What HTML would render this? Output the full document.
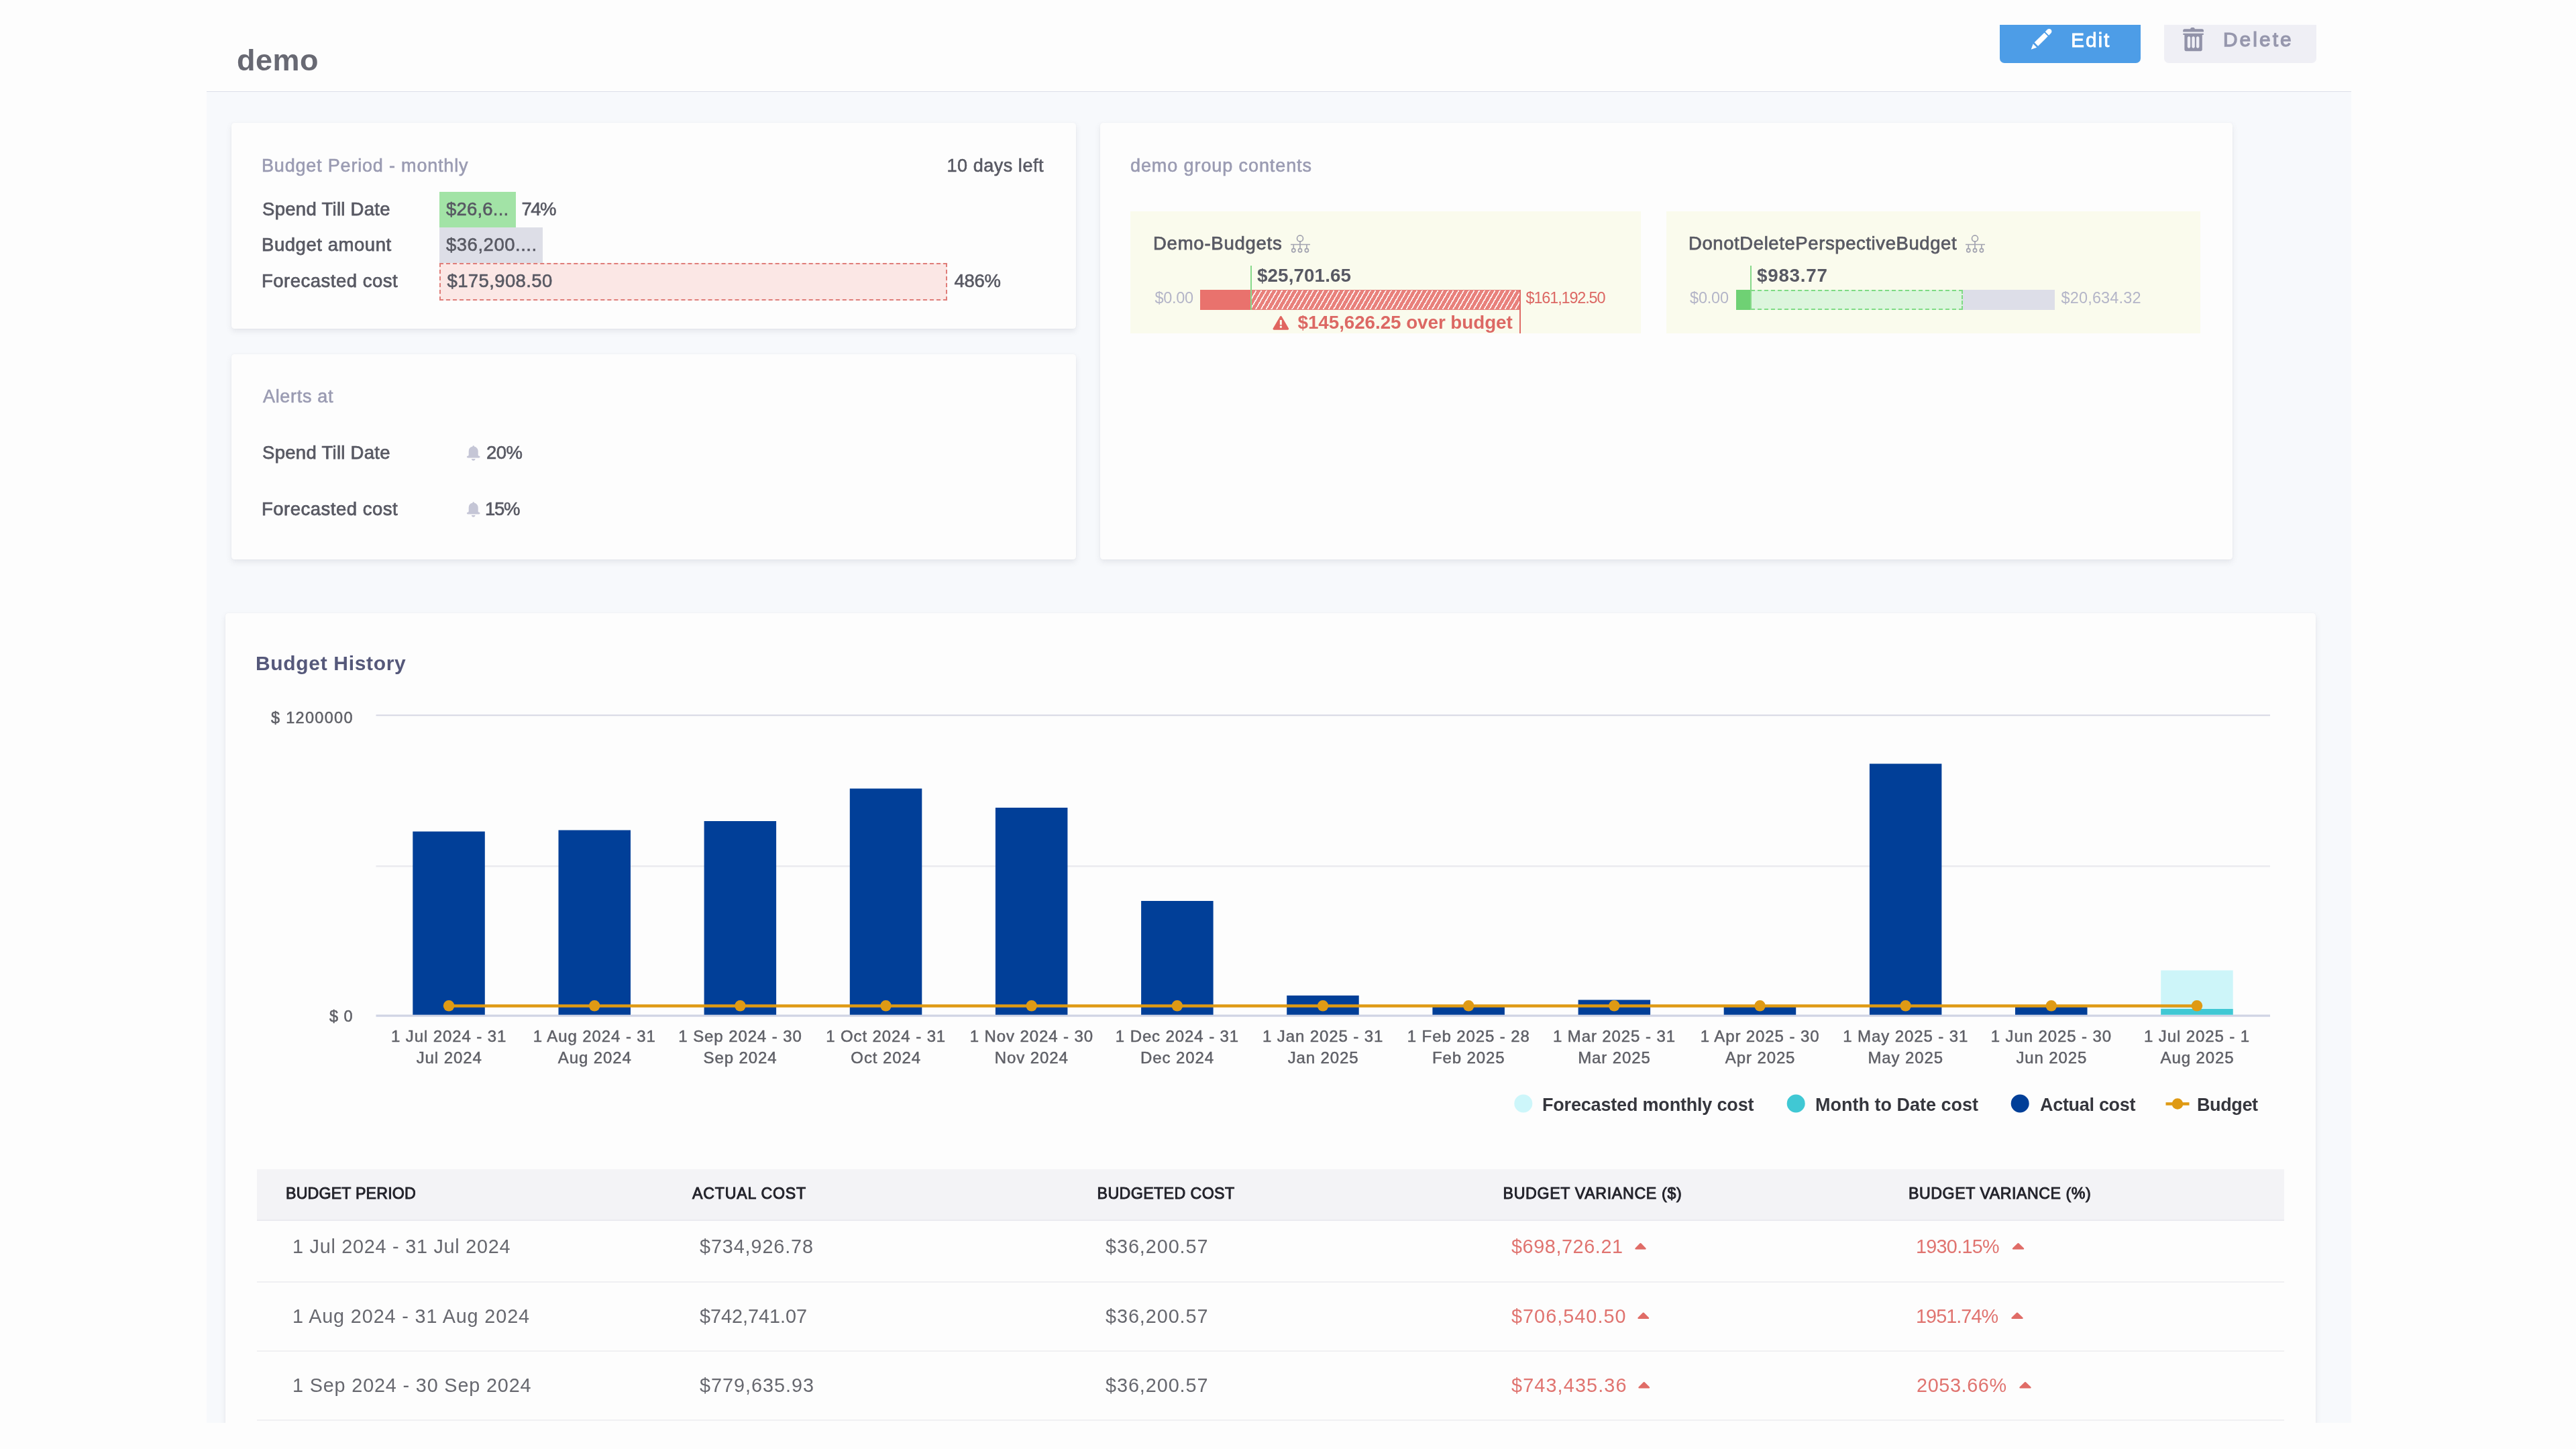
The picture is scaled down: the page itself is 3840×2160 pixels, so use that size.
<!DOCTYPE html>
<html lang="en"><head><meta charset="utf-8"><title>demo - Budget</title>
<style>
html,body{margin:0;padding:0}
body{width:3840px;height:2160px;overflow:hidden;position:relative;background:#fdfdfd;font-family:"Liberation Sans",sans-serif}
.abs,.t,.card,.bar{position:absolute}
.t{white-space:pre;line-height:1}
.header{left:308px;top:36px;width:3197.3px;height:101.4px;background:#fdfdfd;border-bottom:1.8px solid #dde0ea;box-sizing:border-box}
.main{left:308px;top:137.3px;width:3197.3px;height:1984.2px;background:#f7f9fc;overflow:hidden}
.card{background:#fdfdfd;border-radius:4.5px;box-shadow:0 0 2px rgba(40,41,61,.05),0 4px 9px rgba(96,97,112,.12)}
.btn{top:37px;height:57px;border-radius:0 0 7px 7px}
.tile{background:#fafbed}
svg{position:absolute;left:0;top:0;overflow:visible}
</style></head>
<body>
<div class="abs header"></div>
<div class="abs main">
  <div class="card" style="left:37px;top:45.7px;width:1259px;height:307.2px"></div>
  <div class="card" style="left:37px;top:390.7px;width:1259px;height:306.2px"></div>
  <div class="card" style="left:1331.5px;top:45.7px;width:1688.5px;height:651.2px"></div>
  <div class="card" style="left:27.5px;top:776.6px;width:3116.3px;height:1300px"></div>
</div>
<div class="abs btn" style="left:2981px;width:209.5px;background:#4d9de7"></div>
<div class="abs btn" style="left:3226px;width:226.5px;background:#efeff5"></div>

<!-- card 1 bars -->
<div class="bar" style="left:655px;top:286px;width:114px;height:52.5px;background:#a2e3a6"></div>
<div class="bar" style="left:655px;top:338.5px;width:153.5px;height:53px;background:#dddee7"></div>
<div class="bar" style="left:655px;top:391.5px;width:756.5px;height:56.5px;background:#fbe7e5;border:2px dashed #df7d79;box-sizing:border-box"></div>

<!-- card 3 tiles -->
<div class="bar tile" style="left:1684.5px;top:315px;width:761px;height:181.5px"></div>
<div class="bar tile" style="left:2484px;top:315px;width:796px;height:181.5px"></div>
<div class="bar" style="left:1789px;top:431.5px;width:76.5px;height:30px;background:#e9726d"></div>
<div class="bar" style="left:1865.5px;top:431.5px;width:401px;height:30px;background:repeating-linear-gradient(120deg,#e8807b 0 4.9px,#fdeeed 4.9px 6.7px);border-top:1.5px solid #e4807b;border-bottom:1.5px solid #e4807b;box-sizing:border-box"></div>
<div class="bar" style="left:1864.2px;top:396px;width:1.6px;height:65.5px;background:#86d98a"></div>
<div class="bar" style="left:2264.5px;top:431.5px;width:2.5px;height:65px;background:#df6b66"></div>

<div class="bar" style="left:2587.5px;top:431.5px;width:22.5px;height:30px;background:#6fd174"></div>
<div class="bar" style="left:2610px;top:431.5px;width:316px;height:30px;background:#dcf5dd;border:2px dashed #7fdb84;border-left:none;box-sizing:border-box"></div>
<div class="bar" style="left:2926px;top:431.5px;width:136.5px;height:30px;background:#dddee8"></div>
<div class="bar" style="left:2609.2px;top:396px;width:1.6px;height:65.5px;background:#86d98a"></div>

<!-- table -->
<div class="bar" style="left:382.5px;top:1743px;width:3022.5px;height:77px;background:#f3f3f6;border-bottom:2px solid #ebebf0;box-sizing:border-box"></div>
<div class="bar" style="left:382.5px;top:1910px;width:3022.5px;height:1.5px;background:#f0f0f3"></div>
<div class="bar" style="left:382.5px;top:2013px;width:3022.5px;height:1.5px;background:#f0f0f3"></div>
<div class="bar" style="left:382.5px;top:2116px;width:3022.5px;height:1.5px;background:#f0f0f3"></div>

<svg width="3840" height="2160" viewBox="0 0 3840 2160">
  <!-- chart -->
  <line x1="560.5" x2="3384" y1="1066.3" y2="1066.3" stroke="#d6d7e3" stroke-width="2"/>
  <line x1="560.5" x2="3384" y1="1291.2" y2="1291.2" stroke="#ebebef" stroke-width="2.4"/>
  <line x1="560.5" x2="3384" y1="1514.2" y2="1514.2" stroke="#d0d4e4" stroke-width="3.2"/>
  <rect x="615.3" y="1239.5" width="107.5" height="273.2" fill="#013f98"/>
<rect x="832.5" y="1237.5" width="107.5" height="275.2" fill="#013f98"/>
<rect x="1049.6" y="1224" width="107.5" height="288.7" fill="#013f98"/>
<rect x="1266.8" y="1175.5" width="107.5" height="337.2" fill="#013f98"/>
<rect x="1483.9" y="1204" width="107.5" height="308.7" fill="#013f98"/>
<rect x="1701.1" y="1343" width="107.5" height="169.7" fill="#013f98"/>
<rect x="1918.2" y="1484" width="107.5" height="28.7" fill="#013f98"/>
<rect x="2135.4" y="1499.5" width="107.5" height="13.2" fill="#013f98"/>
<rect x="2352.6" y="1490.5" width="107.5" height="22.2" fill="#013f98"/>
<rect x="2569.7" y="1499.5" width="107.5" height="13.2" fill="#013f98"/>
<rect x="2786.9" y="1138.5" width="107.5" height="374.2" fill="#013f98"/>
<rect x="3004.0" y="1499.5" width="107.5" height="13.2" fill="#013f98"/>
<rect x="3221.2" y="1446.5" width="107.5" height="66.20000000000005" fill="#cdf5f9"/>
<rect x="3221.2" y="1504" width="107.5" height="8.700000000000045" fill="#40c8d4"/>

  <line x1="669.1" x2="3274.9" y1="1499.5" y2="1499.5" stroke="#df9a14" stroke-width="4.6"/>
  <circle cx="669.1" cy="1499.3" r="8.3" fill="#df9a14"/><circle cx="886.2" cy="1499.3" r="8.3" fill="#df9a14"/><circle cx="1103.4" cy="1499.3" r="8.3" fill="#df9a14"/><circle cx="1320.5" cy="1499.3" r="8.3" fill="#df9a14"/><circle cx="1537.7" cy="1499.3" r="8.3" fill="#df9a14"/><circle cx="1754.8" cy="1499.3" r="8.3" fill="#df9a14"/><circle cx="1972.0" cy="1499.3" r="8.3" fill="#df9a14"/><circle cx="2189.2" cy="1499.3" r="8.3" fill="#df9a14"/><circle cx="2406.3" cy="1499.3" r="8.3" fill="#df9a14"/><circle cx="2623.5" cy="1499.3" r="8.3" fill="#df9a14"/><circle cx="2840.6" cy="1499.3" r="8.3" fill="#df9a14"/><circle cx="3057.8" cy="1499.3" r="8.3" fill="#df9a14"/><circle cx="3274.9" cy="1499.3" r="8.3" fill="#df9a14"/>
  <!-- legend -->
  <circle cx="2270.8" cy="1645" r="13.5" fill="#cdf6fa"/>
  <circle cx="2677.2" cy="1645" r="13.5" fill="#40c8d4"/>
  <circle cx="3011.2" cy="1645" r="13.5" fill="#013f98"/>
  <line x1="3228.5" x2="3263.5" y1="1645.5" y2="1645.5" stroke="#df9a14" stroke-width="4.5"/>
  <circle cx="3246" cy="1645.5" r="8.3" fill="#df9a14"/>
  <path d="M2438.5 1861.3 L2445.5 1854.2 L2452.5 1861.3 Z" fill="#e06c67" stroke="#e06c67" stroke-width="2.4" stroke-linejoin="round"/>
<path d="M3001.0 1861.3 L3008.5 1854.2 L3016.0 1861.3 Z" fill="#e06c67" stroke="#e06c67" stroke-width="2.4" stroke-linejoin="round"/>
<path d="M2442.5 1964.8 L2449.75 1957.7 L2457.0 1964.8 Z" fill="#e06c67" stroke="#e06c67" stroke-width="2.4" stroke-linejoin="round"/>
<path d="M2999.5 1964.8 L3007.0 1957.7 L3014.5 1964.8 Z" fill="#e06c67" stroke="#e06c67" stroke-width="2.4" stroke-linejoin="round"/>
<path d="M2443.5 2068.3 L2450.75 2061.2 L2458.0 2068.3 Z" fill="#e06c67" stroke="#e06c67" stroke-width="2.4" stroke-linejoin="round"/>
<path d="M3011.5 2068.3 L3019.0 2061.2 L3026.5 2068.3 Z" fill="#e06c67" stroke="#e06c67" stroke-width="2.4" stroke-linejoin="round"/>

  <!-- icons -->
  <g transform="translate(3025.5 40.8) scale(2.2)" fill="#fff"><path d="M3.25 10.26l2.47 2.47 6.69-6.69-2.46-2.48-6.7 6.7zM.99 14.99l3.86-1.39-2.46-2.44-1.4 3.83zm12.25-14c-.48 0-.92.2-1.24.51l-1.44 1.44 2.47 2.47 1.44-1.44c.32-.32.51-.75.51-1.24.01-.95-.77-1.74-1.74-1.74z"/></g>
  <g transform="translate(3252 41) scale(2.2)" fill="#9192a8"><path d="M14.49 3.99h-13c-.28 0-.5.22-.5.5s.22.5.5.5h.5v10c0 .55.45 1 1 1h10c.55 0 1-.45 1-1v-10h.5c.28 0 .5-.22.5-.5s-.22-.5-.5-.5zm-8.5 9c0 .55-.45 1-1 1s-1-.45-1-1v-6c0-.55.45-1 1-1s1 .45 1 1v6zm3 0c0 .55-.45 1-1 1s-1-.45-1-1v-6c0-.55.45-1 1-1s1 .45 1 1v6zm3 0c0 .55-.45 1-1 1s-1-.45-1-1v-6c0-.55.45-1 1-1s1 .45 1 1v6zm1-12h-4c0-.55-.45-1-1-1h-1c-.55 0-1 .45-1 1h-4c-.55 0-1 .45-1 1v1h14v-1c0-.55-.45-1-1-1z"/></g>
  <g transform="translate(694.5 664.3) scale(1.4)" fill="#c5c6d6"><path d="M8 16c1.1 0 2-.9 2-2H6c0 1.1.9 2 2 2zm6-5c-.55 0-1-.45-1-1V6c0-2.43-1.73-4.45-4.02-4.9 0-.04.02-.06.02-.1 0-.55-.45-1-1-1S7 .45 7 1c0 .04.02.07.02.1A4.992 4.992 0 003 6v4c0 .55-.45 1-1 1s-1 .45-1 1 .45 1 1 1h12c.55 0 1-.45 1-1s-.45-1-1-1z"/></g>
  <g transform="translate(694.5 748.3) scale(1.4)" fill="#c5c6d6"><path d="M8 16c1.1 0 2-.9 2-2H6c0 1.1.9 2 2 2zm6-5c-.55 0-1-.45-1-1V6c0-2.43-1.73-4.45-4.02-4.9 0-.04.02-.06.02-.1 0-.55-.45-1-1-1S7 .45 7 1c0 .04.02.07.02.1A4.992 4.992 0 003 6v4c0 .55-.45 1-1 1s-1 .45-1 1 .45 1 1 1h12c.55 0 1-.45 1-1s-.45-1-1-1z"/></g>
  <g transform="translate(1897.5 469.5) scale(1.48)" fill="#e0655f"><path d="M15.84 13.5l.01-.01-7-12-.01.01c-.17-.3-.48-.5-.85-.5s-.67.2-.85.5l-.01-.01-7 12 .01.01c-.09.15-.15.31-.15.5 0 .55.45 1 1 1h14c.55 0 1-.45 1-1 0-.19-.06-.35-.15-.5zm-6.850-.51h-2v-2h2v2zm0-3h-2v-5h2v5z"/></g>
  <g fill="none" stroke="#a2a3b0" stroke-width="1.65"><circle cx="1938" cy="355.4" r="4.5"/><path d="M1938 360 V364.5 M1924 364.5 H1953 M1928.3 364.5 V370 M1938 364.5 V370 M1947.9 364.5 V370"/><circle cx="1928.3" cy="373.2" r="2.6"/><circle cx="1938" cy="373.2" r="2.6"/><circle cx="1947.9" cy="373.2" r="2.6"/></g>
  <g fill="none" stroke="#a2a3b0" stroke-width="1.65"><circle cx="2944" cy="355.4" r="4.5"/><path d="M2944 360 V364.5 M2930 364.5 H2959 M2934.3 364.5 V370 M2944 364.5 V370 M2953.9 364.5 V370"/><circle cx="2934.3" cy="373.2" r="2.6"/><circle cx="2944" cy="373.2" r="2.6"/><circle cx="2953.9" cy="373.2" r="2.6"/></g>
</svg>
<div class="abs" id="labels" style="left:0;top:0;width:3840px;height:2160px;will-change:transform">
<span class="t" style="left:353.00px;top:67.00px;font-size:45px;color:#686973;font-weight:700;letter-spacing:0.491px;">demo</span>
<span class="t" style="left:3087.00px;top:44.70px;font-size:30px;color:#ffffff;letter-spacing:1.877px;-webkit-text-stroke:0.8px #ffffff;">Edit</span>
<span class="t" style="left:3314.00px;top:44.00px;font-size:29.8px;color:#9697ad;letter-spacing:3.086px;-webkit-text-stroke:1.25px #9697ad;">Delete</span>
<span class="t" style="left:390.00px;top:234.30px;font-size:27px;color:#9a9bb2;letter-spacing:0.810px;-webkit-text-stroke:0.6px #9a9bb2;">Budget Period - monthly</span>
<span class="t" style="left:1411.50px;top:234.30px;font-size:27px;color:#585963;letter-spacing:0.537px;-webkit-text-stroke:0.6px #585963;">10 days left</span>
<span class="t" style="left:391.00px;top:297.50px;font-size:27.5px;color:#585963;letter-spacing:0.292px;-webkit-text-stroke:0.75px #585963;">Spend Till Date</span>
<span class="t" style="left:390.00px;top:350.50px;font-size:27.5px;color:#585963;letter-spacing:0.551px;-webkit-text-stroke:0.75px #585963;">Budget amount</span>
<span class="t" style="left:390.00px;top:404.50px;font-size:27.5px;color:#585963;letter-spacing:0.499px;-webkit-text-stroke:0.75px #585963;">Forecasted cost</span>
<span class="t" style="left:665.00px;top:297.50px;font-size:27.5px;color:#585963;letter-spacing:0.199px;-webkit-text-stroke:0.6px #585963;">$26,6...</span>
<span class="t" style="left:777.50px;top:297.50px;font-size:27.5px;color:#585963;letter-spacing:-1.547px;-webkit-text-stroke:0.6px #585963;">74%</span>
<span class="t" style="left:665.00px;top:350.50px;font-size:27.5px;color:#585963;letter-spacing:0.517px;-webkit-text-stroke:0.6px #585963;">$36,200....</span>
<span class="t" style="left:666.50px;top:405.00px;font-size:27.5px;color:#585963;letter-spacing:0.386px;-webkit-text-stroke:0.6px #585963;">$175,908.50</span>
<span class="t" style="left:1422.50px;top:404.50px;font-size:27.5px;color:#585963;letter-spacing:-0.297px;-webkit-text-stroke:0.6px #585963;">486%</span>
<span class="t" style="left:392.00px;top:578.00px;font-size:27px;color:#9a9bb2;letter-spacing:0.682px;-webkit-text-stroke:0.6px #9a9bb2;">Alerts at</span>
<span class="t" style="left:391.00px;top:660.50px;font-size:27.5px;color:#585963;letter-spacing:0.292px;-webkit-text-stroke:0.75px #585963;">Spend Till Date</span>
<span class="t" style="left:725.00px;top:660.50px;font-size:27.5px;color:#585963;letter-spacing:-0.547px;-webkit-text-stroke:0.6px #585963;">20%</span>
<span class="t" style="left:390.00px;top:744.50px;font-size:27.5px;color:#585963;letter-spacing:0.499px;-webkit-text-stroke:0.75px #585963;">Forecasted cost</span>
<span class="t" style="left:722.90px;top:744.50px;font-size:27.5px;color:#585963;letter-spacing:-1.200px;-webkit-text-stroke:0.6px #585963;">15%</span>
<span class="t" style="left:1685.00px;top:234.30px;font-size:27px;color:#9a9bb2;letter-spacing:0.907px;-webkit-text-stroke:0.6px #9a9bb2;">demo group contents</span>
<span class="t" style="left:1719.00px;top:348.50px;font-size:27.5px;color:#585963;letter-spacing:0.756px;-webkit-text-stroke:0.75px #585963;">Demo-Budgets</span>
<span class="t" style="left:1874.00px;top:396.50px;font-size:27.8px;color:#585963;font-weight:700;letter-spacing:0.093px;">$25,701.65</span>
<span class="t" style="left:1721.50px;top:433.00px;font-size:23.5px;color:#b4b5c8;letter-spacing:-0.311px;">$0.00</span>
<span class="t" style="left:2274.50px;top:433.00px;font-size:23.5px;color:#dc6864;letter-spacing:-1.162px;">$161,192.50</span>
<span class="t" style="left:1934.50px;top:466.50px;font-size:27.8px;color:#dc6864;font-weight:700;letter-spacing:-0.051px;">$145,626.25 over budget</span>
<span class="t" style="left:2517.00px;top:348.50px;font-size:27.5px;color:#585963;letter-spacing:0.590px;-webkit-text-stroke:0.75px #585963;">DonotDeletePerspectiveBudget</span>
<span class="t" style="left:2619.00px;top:396.50px;font-size:27.8px;color:#585963;font-weight:700;letter-spacing:0.746px;">$983.77</span>
<span class="t" style="left:2519.00px;top:433.00px;font-size:23.5px;color:#b4b5c8;letter-spacing:-0.186px;">$0.00</span>
<span class="t" style="left:3072.50px;top:433.00px;font-size:23.5px;color:#b4b5c8;letter-spacing:0.161px;">$20,634.32</span>
<span class="t" style="left:381.00px;top:973.50px;font-size:30px;color:#55587a;font-weight:700;letter-spacing:0.667px;">Budget History</span>
<span class="t" style="left:404.00px;top:1059.00px;font-size:23.5px;color:#5f6067;letter-spacing:1.309px;-webkit-text-stroke:0.5px #5f6067;">$ 1200000</span>
<span class="t" style="left:491.00px;top:1504.00px;font-size:23.5px;color:#5f6067;letter-spacing:0.949px;-webkit-text-stroke:0.5px #5f6067;">$ 0</span>
<span class="t" style="left:583.06px;top:1533.00px;font-size:24px;color:#5f6067;letter-spacing:0.900px;-webkit-text-stroke:0.5px #5f6067;">1 Jul 2024 - 31</span>
<span class="t" style="left:620.73px;top:1564.50px;font-size:24px;color:#5f6067;letter-spacing:0.900px;-webkit-text-stroke:0.5px #5f6067;">Jul 2024</span>
<span class="t" style="left:794.86px;top:1533.00px;font-size:24px;color:#5f6067;letter-spacing:0.900px;-webkit-text-stroke:0.5px #5f6067;">1 Aug 2024 - 31</span>
<span class="t" style="left:831.87px;top:1564.50px;font-size:24px;color:#5f6067;letter-spacing:0.900px;-webkit-text-stroke:0.5px #5f6067;">Aug 2024</span>
<span class="t" style="left:1011.35px;top:1533.00px;font-size:24px;color:#5f6067;letter-spacing:0.900px;-webkit-text-stroke:0.5px #5f6067;">1 Sep 2024 - 30</span>
<span class="t" style="left:1048.53px;top:1564.50px;font-size:24px;color:#5f6067;letter-spacing:0.900px;-webkit-text-stroke:0.5px #5f6067;">Sep 2024</span>
<span class="t" style="left:1231.19px;top:1533.00px;font-size:24px;color:#5f6067;letter-spacing:0.900px;-webkit-text-stroke:0.5px #5f6067;">1 Oct 2024 - 31</span>
<span class="t" style="left:1268.36px;top:1564.50px;font-size:24px;color:#5f6067;letter-spacing:0.900px;-webkit-text-stroke:0.5px #5f6067;">Oct 2024</span>
<span class="t" style="left:1445.68px;top:1533.00px;font-size:24px;color:#5f6067;letter-spacing:0.900px;-webkit-text-stroke:0.5px #5f6067;">1 Nov 2024 - 30</span>
<span class="t" style="left:1482.84px;top:1564.50px;font-size:24px;color:#5f6067;letter-spacing:0.900px;-webkit-text-stroke:0.5px #5f6067;">Nov 2024</span>
<span class="t" style="left:1662.83px;top:1533.00px;font-size:24px;color:#5f6067;letter-spacing:0.900px;-webkit-text-stroke:0.5px #5f6067;">1 Dec 2024 - 31</span>
<span class="t" style="left:1699.99px;top:1564.50px;font-size:24px;color:#5f6067;letter-spacing:0.900px;-webkit-text-stroke:0.5px #5f6067;">Dec 2024</span>
<span class="t" style="left:1881.98px;top:1533.00px;font-size:24px;color:#5f6067;letter-spacing:0.900px;-webkit-text-stroke:0.5px #5f6067;">1 Jan 2025 - 31</span>
<span class="t" style="left:1919.64px;top:1564.50px;font-size:24px;color:#5f6067;letter-spacing:0.900px;-webkit-text-stroke:0.5px #5f6067;">Jan 2025</span>
<span class="t" style="left:2097.80px;top:1533.00px;font-size:24px;color:#5f6067;letter-spacing:0.900px;-webkit-text-stroke:0.5px #5f6067;">1 Feb 2025 - 28</span>
<span class="t" style="left:2134.97px;top:1564.50px;font-size:24px;color:#5f6067;letter-spacing:0.900px;-webkit-text-stroke:0.5px #5f6067;">Feb 2025</span>
<span class="t" style="left:2314.96px;top:1533.00px;font-size:24px;color:#5f6067;letter-spacing:0.900px;-webkit-text-stroke:0.5px #5f6067;">1 Mar 2025 - 31</span>
<span class="t" style="left:2352.14px;top:1564.50px;font-size:24px;color:#5f6067;letter-spacing:0.900px;-webkit-text-stroke:0.5px #5f6067;">Mar 2025</span>
<span class="t" style="left:2534.77px;top:1533.00px;font-size:24px;color:#5f6067;letter-spacing:0.900px;-webkit-text-stroke:0.5px #5f6067;">1 Apr 2025 - 30</span>
<span class="t" style="left:2571.78px;top:1564.50px;font-size:24px;color:#5f6067;letter-spacing:0.900px;-webkit-text-stroke:0.5px #5f6067;">Apr 2025</span>
<span class="t" style="left:2747.27px;top:1533.00px;font-size:24px;color:#5f6067;letter-spacing:0.900px;-webkit-text-stroke:0.5px #5f6067;">1 May 2025 - 31</span>
<span class="t" style="left:2784.44px;top:1564.50px;font-size:24px;color:#5f6067;letter-spacing:0.900px;-webkit-text-stroke:0.5px #5f6067;">May 2025</span>
<span class="t" style="left:2967.74px;top:1533.00px;font-size:24px;color:#5f6067;letter-spacing:0.900px;-webkit-text-stroke:0.5px #5f6067;">1 Jun 2025 - 30</span>
<span class="t" style="left:3005.41px;top:1564.50px;font-size:24px;color:#5f6067;letter-spacing:0.900px;-webkit-text-stroke:0.5px #5f6067;">Jun 2025</span>
<span class="t" style="left:3196.03px;top:1533.00px;font-size:24px;color:#5f6067;letter-spacing:0.900px;-webkit-text-stroke:0.5px #5f6067;">1 Jul 2025 - 1</span>
<span class="t" style="left:3220.56px;top:1564.50px;font-size:24px;color:#5f6067;letter-spacing:0.900px;-webkit-text-stroke:0.5px #5f6067;">Aug 2025</span>
<span class="t" style="left:2299.00px;top:1633.50px;font-size:27px;color:#35363d;font-weight:700;letter-spacing:-0.186px;">Forecasted monthly cost</span>
<span class="t" style="left:2706.00px;top:1633.50px;font-size:27px;color:#35363d;font-weight:700;">Month to Date cost</span>
<span class="t" style="left:3041.00px;top:1633.50px;font-size:27px;color:#35363d;font-weight:700;letter-spacing:-0.306px;">Actual cost</span>
<span class="t" style="left:3275.00px;top:1633.50px;font-size:27px;color:#35363d;font-weight:700;letter-spacing:-0.399px;">Budget</span>
<span class="t" style="left:426.00px;top:1768.20px;font-size:23.2px;color:#23232b;letter-spacing:0.183px;-webkit-text-stroke:0.95px #23232b;">BUDGET PERIOD</span>
<span class="t" style="left:1032.00px;top:1768.20px;font-size:23.2px;color:#23232b;letter-spacing:0.768px;-webkit-text-stroke:0.95px #23232b;">ACTUAL COST</span>
<span class="t" style="left:1635.50px;top:1768.20px;font-size:23.2px;color:#23232b;letter-spacing:0.415px;-webkit-text-stroke:0.95px #23232b;">BUDGETED COST</span>
<span class="t" style="left:2240.50px;top:1768.20px;font-size:23.2px;color:#23232b;letter-spacing:0.665px;-webkit-text-stroke:0.95px #23232b;">BUDGET VARIANCE ($)</span>
<span class="t" style="left:2845.00px;top:1768.20px;font-size:23.2px;color:#23232b;letter-spacing:0.542px;-webkit-text-stroke:0.95px #23232b;">BUDGET VARIANCE (%)</span>
<span class="t" style="left:436.00px;top:1844.00px;font-size:28.8px;color:#67686f;letter-spacing:0.745px;">1 Jul 2024 - 31 Jul 2024</span>
<span class="t" style="left:1043.00px;top:1844.00px;font-size:28.8px;color:#67686f;letter-spacing:0.887px;">$734,926.78</span>
<span class="t" style="left:1648.00px;top:1844.00px;font-size:28.8px;color:#67686f;letter-spacing:0.931px;">$36,200.57</span>
<span class="t" style="left:2253.00px;top:1844.00px;font-size:28.8px;color:#e07470;letter-spacing:0.587px;">$698,726.21</span>
<span class="t" style="left:2856.00px;top:1844.00px;font-size:28.8px;color:#e07470;letter-spacing:-0.728px;">1930.15%</span>
<span class="t" style="left:436.00px;top:1947.50px;font-size:28.8px;color:#67686f;letter-spacing:0.868px;">1 Aug 2024 - 31 Aug 2024</span>
<span class="t" style="left:1043.00px;top:1947.50px;font-size:28.8px;color:#67686f;letter-spacing:-0.013px;">$742,741.07</span>
<span class="t" style="left:1648.00px;top:1947.50px;font-size:28.8px;color:#67686f;letter-spacing:0.931px;">$36,200.57</span>
<span class="t" style="left:2253.00px;top:1947.50px;font-size:28.8px;color:#e07470;letter-spacing:1.037px;">$706,540.50</span>
<span class="t" style="left:2856.00px;top:1947.50px;font-size:28.8px;color:#e07470;letter-spacing:-0.943px;">1951.74%</span>
<span class="t" style="left:436.00px;top:2051.00px;font-size:28.8px;color:#67686f;letter-spacing:0.838px;">1 Sep 2024 - 30 Sep 2024</span>
<span class="t" style="left:1043.00px;top:2051.00px;font-size:28.8px;color:#67686f;letter-spacing:0.987px;">$779,635.93</span>
<span class="t" style="left:1648.00px;top:2051.00px;font-size:28.8px;color:#67686f;letter-spacing:0.931px;">$36,200.57</span>
<span class="t" style="left:2253.00px;top:2051.00px;font-size:28.8px;color:#e07470;letter-spacing:1.137px;">$743,435.36</span>
<span class="t" style="left:2857.00px;top:2051.00px;font-size:28.8px;color:#e07470;letter-spacing:0.629px;">2053.66%</span>
</div>
</body></html>
